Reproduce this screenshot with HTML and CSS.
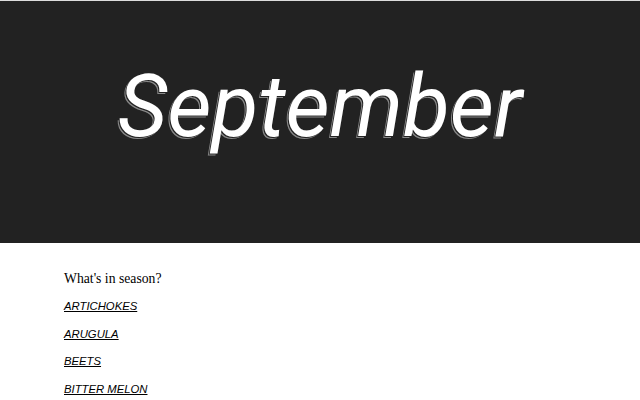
FILE: index.html
```html
<!DOCTYPE html>
<html>
<head>
<meta charset="utf-8">
<link rel="stylesheet" href="styles.css">
</head>
<body>
<header class="hero">
  <h1 class="hero-title">September</h1>
</header>
<main class="content">
  <p class="intro">What's in season?</p>
  <ul class="list">
    <li><a href="#">Artichokes</a></li>
    <li><a href="#">Arugula</a></li>
    <li><a href="#">Beets</a></li>
    <li><a href="#">Bitter Melon</a></li>
  </ul>
</main>
</body>
</html>
```
FILE: styles.css
```css
html, body {
  margin: 0;
  padding: 0;
  background: #fff;
}
body {
  border-top: 1px solid #ddd;
}
.hero {
  background: #222;
  height: 242px;
  display: flex;
  align-items: center;
  justify-content: center;
}
.hero-title {
  margin: 0 0 30px;
  font-family: Roboto, sans-serif;
  font-style: italic;
  font-weight: 400;
  font-size: 86px;
  line-height: 100px;
  color: #fff;
  text-shadow: -1px 1px 0 #222, -2px 2px 0 #888;
}
.content {
  padding: 28px 64px 0;
}
.intro {
  margin: 0 0 11px;
  font-family: "Liberation Serif", serif;
  font-size: 13.7px;
  line-height: 16px;
  color: #000;
}
.list {
  list-style: none;
  margin: 0;
  padding: 0;
  display: flex;
  flex-direction: column;
  gap: 11.67px;
}
.list a {
  font-family: "Liberation Sans", sans-serif;
  font-style: italic;
  font-size: 11.3px;
  text-transform: uppercase;
  color: #000;
  line-height: 16px;
  display: block;
}
```
